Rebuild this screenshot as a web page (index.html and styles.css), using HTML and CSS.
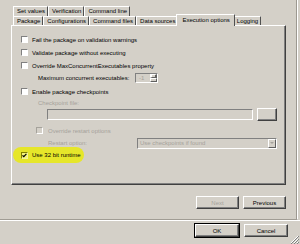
FILE: index.html
```html
<!DOCTYPE html>
<html lang="en">
<head>
    <meta charset="UTF-8">
    <title>Execute Package Utility</title>
    <link rel="stylesheet" href="styles.css">
</head>
<body>
    <div class="top">
        <div class="main">
            <div class="tabs">
                <div class="tab-row back">
                    <span class="tab">Set values</span>
                    <span class="tab">Verification</span>
                    <span class="tab">Command line</span>
                </div>
                <div class="tab-row front">
                    <span class="tab">Package</span>
                    <span class="tab">Configurations</span>
                    <span class="tab">Command files</span>
                    <span class="tab">Data sources</span>
                    <span class="tab active">Execution options</span>
                    <span class="tab">Logging</span>
                </div>
            </div>

            <div class="panel">
                <div class="row"><span class="check"></span>Fail the package on validation warnings</div>
                <div class="row"><span class="check"></span>Validate package without executing</div>
                <div class="row"><span class="check"></span>Override MaxConcurrentExecutables property</div>
                <div class="row row-max">
                    <span class="label-max">Maximum concurrent executables:</span>
                    <span class="spin">
                        <span class="spin-val">-1</span>
                        <span class="spin-btns"><span class="arrow-up"></span><span class="arrow-down"></span></span>
                    </span>
                </div>
                <div class="row row-enable"><span class="check"></span>Enable package checkpoints</div>
                <div class="row row-cplabel disabled">Checkpoint file:</div>
                <div class="row row-file">
                    <span class="field"></span>
                    <span class="btn-browse"></span>
                </div>
                <div class="row row-restart disabled"><span class="check off"></span>Override restart options</div>
                <div class="row row-option disabled">
                    <span class="label-option">Restart option:</span>
                    <span class="combo">
                        <span class="combo-val">Use checkpoints if found</span>
                        <span class="combo-btn"><span class="arrow-down"></span></span>
                    </span>
                </div>
                <div class="row row-32">
                    <span class="highlight">
                        <span class="check checked">
                            <svg width="5" height="5" viewBox="0 0 5 5"><path d="M0.5 2.3 L1.8 3.6 L4.4 0.9" fill="none" stroke="#000" stroke-width="1.2"/></svg>
                        </span>Use 32 bit runtime
                    </span>
                </div>
            </div>

            <div class="nav">
                <button class="btn" disabled>Next</button>
                <button class="btn">Previous</button>
            </div>
        </div>
    </div>

    <div class="footer">
        <button class="btn default">OK</button>
        <button class="btn">Cancel</button>
        <svg class="grip" width="9" height="9" viewBox="0 0 9 9">
            <path d="M8 1 L1 8 M8 4 L4 8 M8 7 L7 8" stroke="#fff" stroke-width="1"/>
            <path d="M9 1 L1 9 M9 4 L4 9 M9 7 L7 9" stroke="#808080" stroke-width="1"/>
        </svg>
    </div>
</body>
</html>
```

FILE: styles.css
```css
body {
    margin: 0;
    width: 300px;
    height: 244px;
    overflow: hidden;
    background-color: #d4d0c8;
    font-family: "Liberation Sans", Arial, sans-serif;
    font-size: 6px;
    color: #000;
}

.top {
    display: flex;
    width: 298px;
    height: 220px;
    box-sizing: border-box;
    border-bottom: 1px solid #a09c94;
    border-right: 1px solid #fff;
}

.main {
    flex: 1;
    padding: 6px 10px 0 11px;
    border-right: 1px solid #9c9890;
}

/* tabs */
.tab-row {
    display: flex;
    padding-left: 2px;
}

.tab-row.back {
    height: 10px;
}

.tab-row.front {
    height: 9px;
    align-items: flex-end;
}

.tab {
    box-sizing: border-box;
    padding: 0 2px 0 3px;
    border-top: 1px solid #fff;
    border-left: 1px solid #fff;
    border-right: 1px solid #505050;
    white-space: nowrap;
}

.back .tab {
    height: 10px;
    line-height: 9px;
}

.front .tab {
    height: 9px;
    line-height: 8px;
}

.front .tab.active {
    position: relative;
    z-index: 1;
    height: 12px;
    line-height: 10px;
    margin: 0 -2px -1px -2px;
    padding: 0 4px 0 5px;
    background-color: #d4d0c8;
}

/* panel */
.panel {
    height: 160px;
    box-sizing: border-box;
    padding: 7px 0 0 9px;
    border: 1px solid;
    border-color: #fff #404040 #404040 #fff;
    box-shadow: inset -1px -1px 0 #808080;
}

.row {
    display: flex;
    align-items: center;
    height: 13px;
    white-space: nowrap;
}

.disabled {
    color: #a5a29b;
}

.check {
    display: flex;
    align-items: center;
    justify-content: center;
    width: 7px;
    height: 7px;
    box-sizing: border-box;
    margin-right: 4px;
    border: 1px solid;
    border-color: #808080 #fff #fff #808080;
    background-color: #fff;
}

.check.off {
    background-color: #d4d0c8;
}

.row-max {
    height: 12px;
    padding-left: 17px;
}

.label-max {
    width: 97px;
}

.spin {
    display: flex;
    width: 23px;
    height: 10px;
    box-sizing: border-box;
    border: 1px solid;
    border-color: #808080 #fff #fff #808080;
}

.spin-val {
    flex: 1;
    padding-left: 3px;
    line-height: 8px;
    color: #a5a29b;
}

.spin-btns {
    display: flex;
    flex-direction: column;
    width: 7px;
}

.spin-btns span,
.combo-btn {
    flex: 1;
    display: flex;
    align-items: center;
    justify-content: center;
    box-sizing: border-box;
    border: 1px solid;
    border-color: #fff #606060 #606060 #fff;
}

.arrow-up {
    border-left: 1.5px solid transparent;
    border-right: 1.5px solid transparent;
    border-bottom: 1.5px solid #a5a29b;
}

.arrow-down {
    border-left: 1.5px solid transparent;
    border-right: 1.5px solid transparent;
    border-top: 1.5px solid #8a877f;
}

.spin-btns .arrow-up {
    border-left-width: 2px;
    border-right-width: 2px;
    border-color: #fff #606060 #606060 #fff;
}

.row-enable {
    margin-top: 1px;
}

.row-cplabel {
    height: 9px;
    padding-left: 17px;
}

.row-file {
    height: 15px;
    padding-left: 26px;
}

.field {
    width: 206px;
    height: 11px;
    box-sizing: border-box;
    border: 1px solid;
    border-color: #808080 #fff #fff #808080;
}

.btn-browse {
    width: 20px;
    height: 13px;
    margin-left: 4px;
    box-sizing: border-box;
    border: 1px solid;
    border-color: #fff #404040 #404040 #fff;
    box-shadow: inset -1px -1px 0 #808080;
}

.row-restart {
    margin-top: 2px;
    padding-left: 15px;
}

.row-restart .check {
    border-color: #a5a29b #fff #fff #a5a29b;
    margin-right: 5px;
}

.row-option {
    height: 12px;
    padding-left: 27px;
}

.label-option {
    width: 89px;
}

.combo {
    display: flex;
    width: 140px;
    height: 11px;
    box-sizing: border-box;
    border: 1px solid;
    border-color: #808080 #fff #fff #808080;
}

.combo-val {
    flex: 1;
    padding-left: 2px;
    line-height: 9px;
}

.combo-btn {
    flex: none;
    width: 8px;
}

.combo-btn .arrow-down {
    border-left-width: 2px;
    border-right-width: 2px;
    border-top-width: 2px;
    border-top-color: #a5a29b;
}

.row-32 {
    height: 16px;
    margin-top: -2px;
}

.highlight {
    display: flex;
    align-items: center;
    height: 16px;
    margin-left: -8px;
    padding: 0 3px 0 8px;
    border-radius: 8px;
    background-color: #e6e62a;
}

.highlight .check {
    border-color: #808000 #f4f4a0 #f4f4a0 #808000;
    background-color: #f4f47a;
}

/* buttons */
.nav {
    display: flex;
    justify-content: flex-end;
    gap: 4px;
    margin-top: 11px;
}

.btn {
    appearance: none;
    width: 43px;
    height: 13px;
    box-sizing: border-box;
    padding: 0;
    margin: 0;
    font: inherit;
    color: #000;
    background-color: #d4d0c8;
    border: 1px solid;
    border-color: #fff #404040 #404040 #fff;
    box-shadow: inset -1px -1px 0 #808080;
}

.btn:disabled {
    color: #a5a29b;
}

.btn.default {
    outline: 1px solid #000;
}

.footer {
    display: flex;
    justify-content: flex-end;
    align-items: flex-start;
    height: 24px;
    box-sizing: border-box;
    padding: 3px 1px 0 0;
    border-top: 1px solid #fff;
}

.footer .btn {
    width: 44px;
}

.footer .btn + .btn {
    margin-left: 5px;
}

.grip {
    align-self: flex-end;
    margin-left: 2px;
}
```
